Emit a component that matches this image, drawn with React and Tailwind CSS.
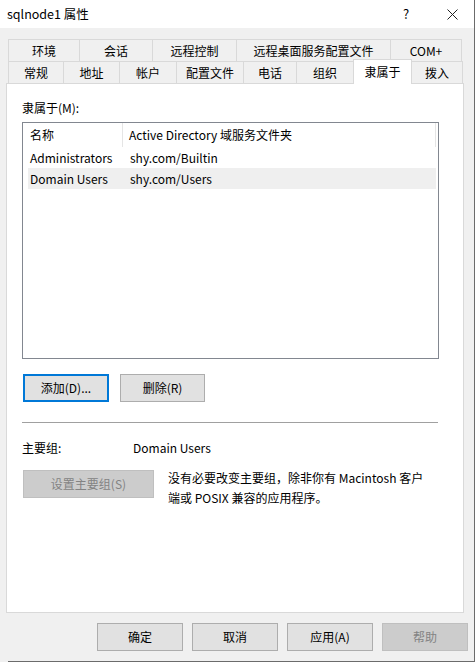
import React from 'react';

const font = { fontFamily: '"Noto Sans CJK SC", "Noto Sans", sans-serif' };

function Tab({ w, label, last }) {
  return (
    <div
      className={`h-full flex items-center justify-center border-t border-l border-[#d9d9d9] ${last ? 'border-r' : ''}`}
      style={{ width: w }}
    >
      {label}
    </div>
  );
}

function Btn({ w, label, focus, disabled }) {
  return (
    <div
      className={`h-[28px] flex items-center justify-center ${
        focus
          ? 'border-2 border-[#0078d7] bg-[#e1e1e1]'
          : disabled
          ? 'border border-[#bfbfbf] bg-[#cccccc] text-[#838383]'
          : 'border border-[#adadad] bg-[#e1e1e1]'
      }`}
      style={{ width: w }}
    >
      {label}
    </div>
  );
}

export default function App() {
  const row1 = [
    [71, '环境'],
    [73, '会话'],
    [84, '远程控制'],
    [154, '远程桌面服务配置文件'],
    [72, 'COM+'],
  ];

  return (
    <div
      className="w-[475px] h-[662px] flex flex-col bg-[#f0f0f0] border-r border-[#6b6b6b] text-[12px] text-black overflow-hidden"
      style={font}
    >
      {/* Title bar */}
      <div className="h-[28px] bg-white flex items-center pl-[7px] shrink-0">
        <span className="text-[12.5px]">sqlnode1 属性</span>
        <span className="ml-auto w-[20px] text-center text-[13px]">?</span>
        <span className="ml-[26px] mr-[12px] w-[20px] flex justify-center">
          <svg width="11" height="11" viewBox="0 0 11 11">
            <path d="M0.5 0.5 L10.5 10.5 M10.5 0.5 L0.5 10.5" stroke="#222" strokeWidth="1" />
          </svg>
        </span>
      </div>

      {/* Tabs */}
      <div className="mt-[11px] pl-[8px] h-[22px] flex">
        {row1.map(([w, l], i) => (
          <Tab key={l} w={w} label={l} last={i === row1.length - 1} />
        ))}
      </div>
      <div className="pl-[8px] h-[22px] flex items-end">
        <Tab w={55} label="常规" />
        <Tab w={56} label="地址" />
        <Tab w={57} label="帐户" />
        <Tab w={67} label="配置文件" />
        <Tab w={53} label="电话" />
        <Tab w={57} label="组织" />
        <div className="w-[59px] h-[25px] relative top-[1px] z-10 bg-white border-t border-l border-r border-[#d9d9d9] flex items-center justify-center pb-[1px]">
          隶属于
        </div>
        <div className="w-[51px] h-full flex items-center justify-center border-t border-r border-[#d9d9d9]">
          拨入
        </div>
      </div>

      {/* Panel */}
      <div className="ml-[6px] w-[458px] h-[530px] bg-white border border-[#d9d9d9] pl-[15px] pt-[16px] flex flex-col">
        <div className="h-[16px] leading-[16px]">隶属于(M):</div>

        <div className="mt-[6px] w-[417px] h-[237px] border border-[#828790] flex flex-col">
          <div className="h-[24px] flex items-center">
            <div className="w-[100px] h-full pl-[7px] flex items-center border-r border-[#e5e5e5]">名称</div>
            <div className="w-[313px] h-full pl-[6px] flex items-center border-r border-[#e5e5e5]">
              Active Directory 域服务文件夹
            </div>
          </div>
          <div className="h-[21px] flex items-center">
            <div className="w-[101px] pl-[7px]">Administrators</div>
            <div className="pl-[6px]">shy.com/Builtin</div>
          </div>
          <div className="h-[21px] flex items-center ml-[5px] w-[408px] bg-[#efefef]">
            <div className="w-[96px] pl-[2px]">Domain Users</div>
            <div className="pl-[6px]">shy.com/Users</div>
          </div>
        </div>

        <div className="mt-[15px] flex gap-[11px] pl-[1px]">
          <Btn w={86} label="添加(D)..." focus />
          <Btn w={85} label="删除(R)" />
        </div>

        <div className="mt-[20px] w-[416px] h-px bg-[#a0a0a0]" />

        <div className="mt-[17px] h-[16px] flex items-center">
          <span className="w-[111px]">主要组:</span>
          <span>Domain Users</span>
        </div>

        <div className="mt-[14px] flex pl-[1px]">
          <Btn w={131} label="设置主要组(S)" disabled />
          <div className="ml-[14px] leading-[20px] -mt-[2px]">
            没有必要改变主要组，除非你有 Macintosh 客户
            <br />
            端或 POSIX 兼容的应用程序。
          </div>
        </div>
      </div>

      {/* Bottom buttons */}
      <div className="mt-[10px] pl-[97px] flex gap-[9px]">
        <Btn w={86} label="确定" />
        <Btn w={86} label="取消" />
        <Btn w={86} label="应用(A)" />
        <Btn w={86} label="帮助" disabled />
      </div>

      <div className="mt-auto ml-[8px] h-px bg-[#6b6b6b]" />
    </div>
  );
}
